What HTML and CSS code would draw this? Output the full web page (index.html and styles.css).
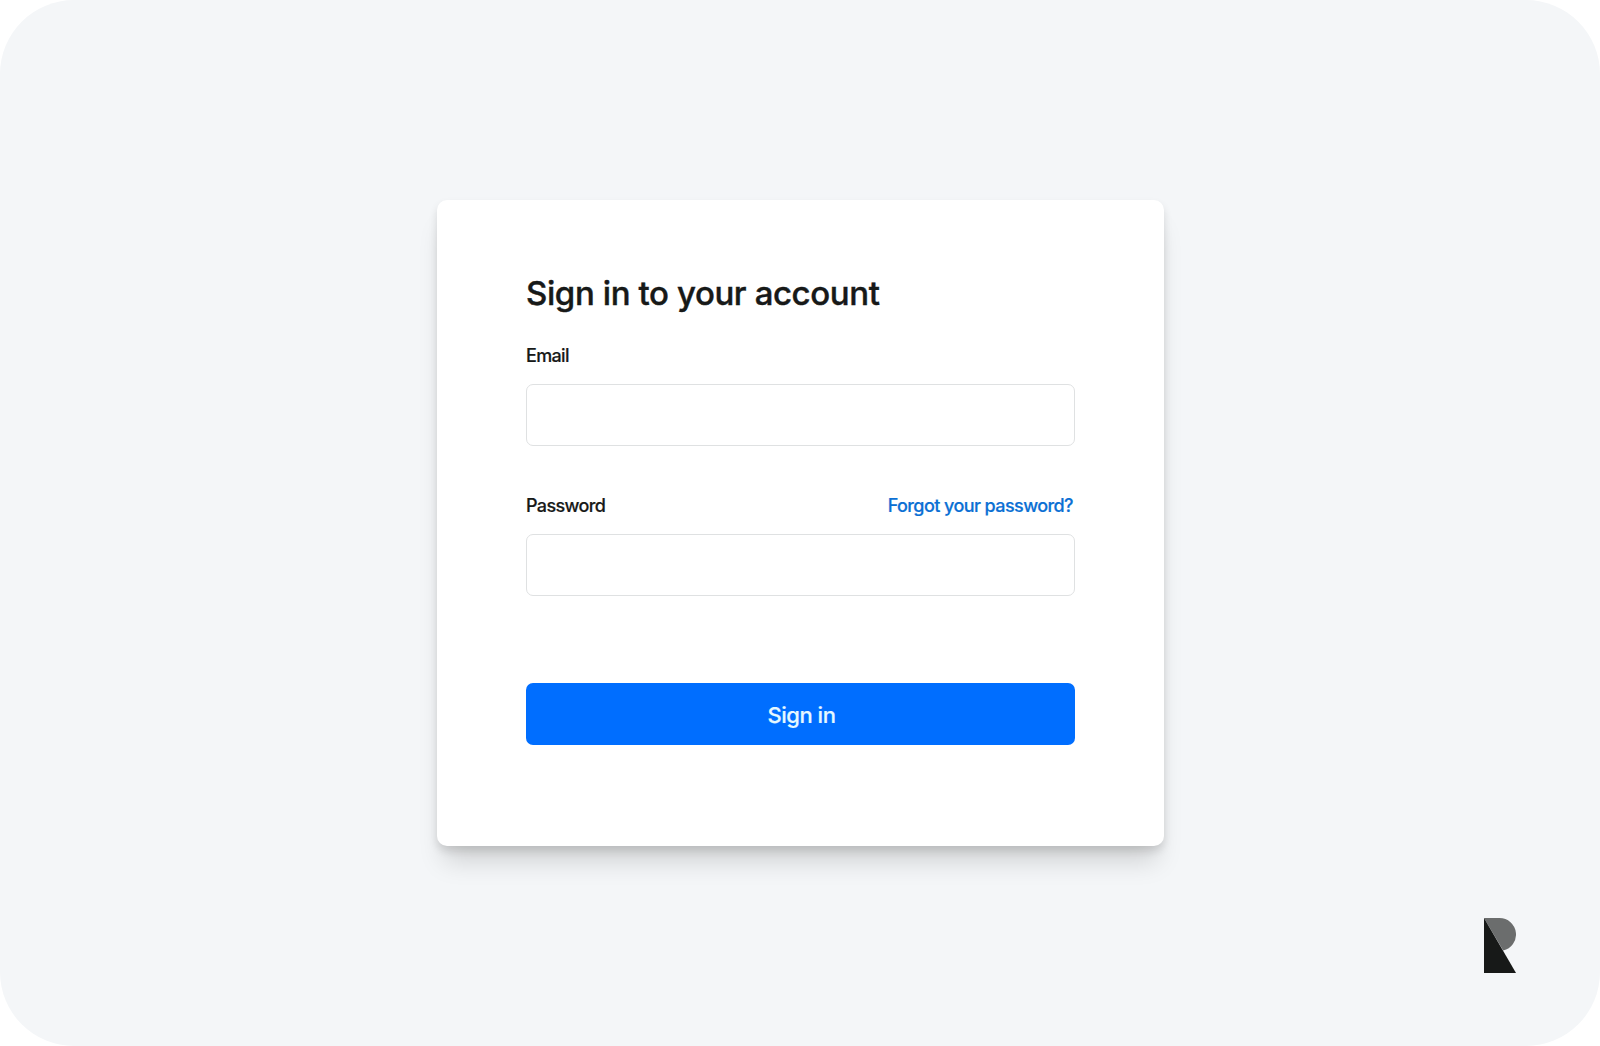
FILE: index.html
```html
<!DOCTYPE html>
<html lang="en">
  <head>
    <meta charset="utf-8">
    <meta name="viewport" content="width=device-width, initial-scale=1">
    <title>Sign in</title>
    <link rel="stylesheet" href="styles.css">
  </head>
  <body>
    <div class="page">
      <form class="card">
        <h1 class="title">Sign in to your account</h1>

        <div class="field">
          <div class="labels">
            <label class="label" for="email">Email</label>
          </div>
          <input class="input" type="email" id="email">
        </div>

        <div class="field">
          <div class="labels">
            <label class="label" for="password">Password</label>
            <a class="forgot" href="#">Forgot your password?</a>
          </div>
          <input class="input" type="password" id="password">
        </div>

        <button class="button" type="submit">Sign in</button>
      </form>

      <svg class="logo" width="32" height="55" viewBox="0 0 32 55">
        <path fill="#6b6d6d" d="M0 0h15.5a16.5 16.5 0 0 1 3.7 32.58z"/>
        <path fill="#171918" d="M0 0l32 55H0z"/>
      </svg>
    </div>
  </body>
</html>
```

FILE: styles.css
```css
* {
  box-sizing: border-box;
}
body {
  margin: 0;
  background: #fff;
  font-family: Inter, "Liberation Sans", sans-serif;
  color: #171918;
}
.page {
  position: relative;
  height: 1046px;
  padding-top: 200px;
  padding-left: 437px;
  background: #f4f6f8;
  border-radius: 74px;
}
.card {
  width: 727px;
  height: 646px;
  padding: 71px 89px 0;
  background: #fff;
  border-radius: 10px;
  box-shadow: 0 5px 8px rgba(0, 0, 0, 0.12), 0 22px 26px -7px rgba(0, 0, 0, 0.15);
}
.title {
  margin: 0 0 23px;
  font-size: 33px;
  font-weight: 500;
  line-height: 44px;
  letter-spacing: -0.4px;
  white-space: nowrap;
  -webkit-text-stroke: 0.4px;
}
.field {
  margin-bottom: 42px;
}
.labels {
  display: flex;
  justify-content: space-between;
  margin-bottom: 11px;
  padding-right: 2px;
  font-size: 18px;
  font-weight: 500;
  line-height: 35px;
  letter-spacing: -0.58px;
  -webkit-text-stroke: 0.2px;
}
.label {
  letter-spacing: -0.65px;
}
.forgot {
  color: #0b70d4;
  text-decoration: none;
}
.input {
  display: block;
  width: 100%;
  height: 62px;
  padding: 0 16px;
  border: 1px solid #dfe1e2;
  border-radius: 7px;
  font: inherit;
  font-size: 18px;
}
.button {
  display: block;
  width: 100%;
  height: 62px;
  margin-top: 87px;
  padding: 2px 0 0 2px;
  border: 0;
  border-radius: 7px;
  background: #006eff;
  color: #e6f8ff;
  font: inherit;
  font-size: 22px;
  font-weight: 500;
  letter-spacing: -0.5px;
  -webkit-text-stroke: 0.2px;
}
.logo {
  position: absolute;
  right: 84px;
  bottom: 73px;
}
```
